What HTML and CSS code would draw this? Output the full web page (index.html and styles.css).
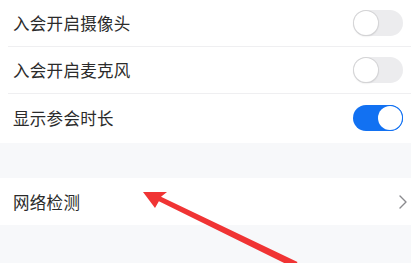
FILE: index.html
```html
<!DOCTYPE html>
<html lang="zh-CN">
<head>
<meta charset="utf-8">
<link rel="stylesheet" href="styles.css">
</head>
<body>
<div class="page">
  <div class="group">
    <div class="row"><span class="label">入会开启摄像头</span><span class="toggle"><span class="knob"></span></span></div>
    <div class="row"><span class="label">入会开启麦克风</span><span class="toggle"><span class="knob"></span></span></div>
    <div class="row last"><span class="label">显示参会时长</span><span class="toggle on"><span class="knob"></span></span></div>
  </div>
  <div class="gap"></div>
  <div class="group">
    <div class="row last link"><span class="label">网络检测</span>
      <svg class="chev" width="8" height="14" viewBox="0 0 8 14"><path d="M1 1 L7 7 L1 13" fill="none" stroke="#8a8a8e" stroke-width="1.4" stroke-linecap="round" stroke-linejoin="round"/></svg>
    </div>
  </div>
  <div class="rest"></div>
  <svg class="arrow" width="411" height="263" viewBox="0 0 411 263">
    <polygon points="143,192 167,192 161,196.8 297.5,261.9 294.5,268.1 158.9,201.3 155,208" fill="#f03434"/>
  </svg>
</div>
</body>
</html>
```
FILE: styles.css
```css
html, body { margin: 0; padding: 0; }
body {
  background: #f7f8fa;
  font-family: "Noto Sans CJK SC", "Noto Sans", sans-serif;
  width: 411px;
  height: 263px;
  overflow: hidden;
}
.page { position: relative; width: 411px; height: 263px; }
.group { background: #ffffff; padding-left: 8px; }
.row {
  height: 46px;
  display: flex;
  align-items: center;
  justify-content: space-between;
  padding: 0 8px 0 5px;
  border-bottom: 1px solid #efeff1;
}
.row.last { border-bottom: none; height: 47px; }
.group:first-child { padding-bottom: 2px; }
.label { font-size: 16.5px; color: #2b2b2b; letter-spacing: 0.3px; }
.gap { height: 35px; }
.link { padding-right: 4px; }
.chev { display: block; }
.toggle {
  width: 50px;
  height: 26px;
  border-radius: 13px;
  background: #ececee;
  position: relative;
  box-sizing: border-box;
}
.knob {
  position: absolute;
  left: 1px;
  top: 1px;
  width: 24px;
  height: 24px;
  border-radius: 50%;
  background: #ffffff;
  box-shadow: 0 0 0 1px #d4d4d6, 0 1px 2px rgba(0,0,0,0.18);
}
.toggle.on { background: #1271f2; }
.toggle.on .knob { left: 25px; box-shadow: 0 0 0 1px #1271f2; }
.arrow { position: absolute; left: 0; top: 0; pointer-events: none; }
```
